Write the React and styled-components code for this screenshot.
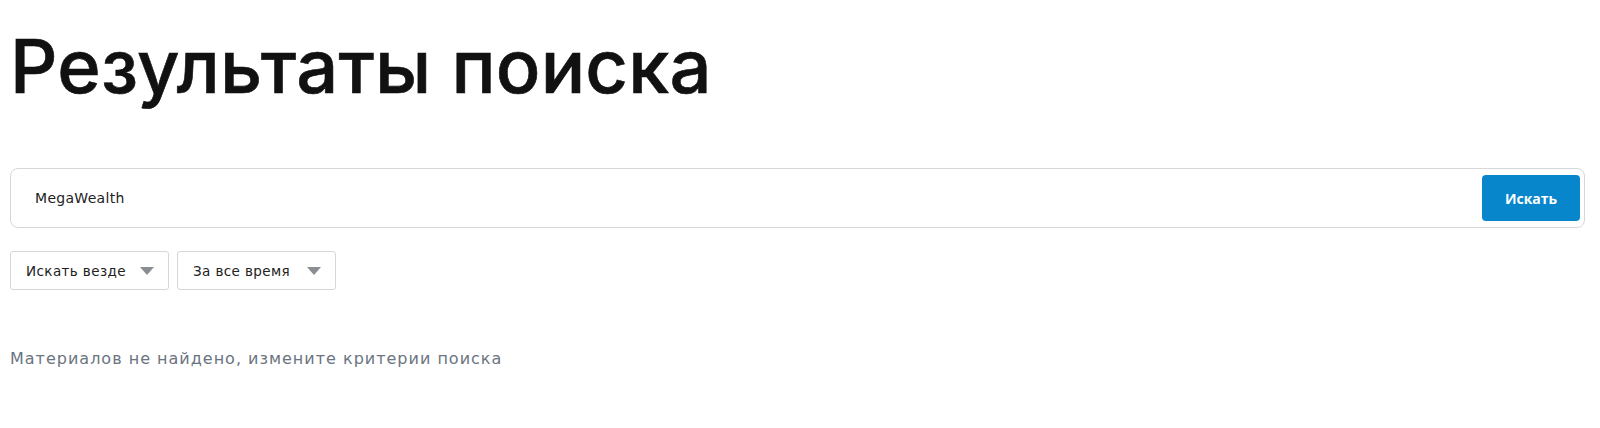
import React from "react";
import styled, { createGlobalStyle } from "styled-components";

const GlobalStyle = createGlobalStyle`
  body {
    margin: 0;
    background: #fff;
    font-family: "DejaVu Sans", "Open Sans", sans-serif;
  }
`;

export default function App() {
  return (
    <>
      <GlobalStyle />
      <Page>
        <Title>Результаты поиска</Title>
        <SearchBox>
          <SearchInput defaultValue="MegaWealth" />
          <SearchButton>Искать</SearchButton>
        </SearchBox>
        <Filters>
          <Select>
            <span>Искать везде</span>
            <Arrow />
          </Select>
          <Select>
            <span>За все время</span>
            <Arrow />
          </Select>
        </Filters>
        <Empty>Материалов не найдено, измените критерии поиска</Empty>
      </Page>
    </>
  );
}

const Arrow = () => (
  <ArrowSvg viewBox="0 0 14 8">
    <path d="M0 0 H14 L7 8 Z" fill="#8a8d92" />
  </ArrowSvg>
);

const Page = styled.div`
  padding: 21px 15px 0 10px;
`;

const Title = styled.h1`
  margin: 0;
  font-family: "Inter", "Liberation Sans", sans-serif;
  font-size: 74px;
  font-weight: 500;
  letter-spacing: 0.2px;
  line-height: 90px;
  color: #111;
  -webkit-text-stroke: 0.6px #111;
`;

const SearchBox = styled.div`
  margin-top: 57px;
  height: 60px;
  box-sizing: border-box;
  border: 1px solid #d5d7da;
  border-radius: 8px;
  display: flex;
  align-items: center;
  padding: 0 4px 0 22px;
`;

const SearchInput = styled.input`
  flex: 1;
  border: 0;
  outline: none;
  font-family: "DejaVu Sans", sans-serif;
  font-size: 14px;
  letter-spacing: 0.3px;
  color: #222;
  background: transparent;
`;

const SearchButton = styled.button`
  width: 98px;
  height: 46px;
  border: 0;
  border-radius: 4px;
  background: #0786cc;
  color: #fff;
  font-family: "Open Sans", "Liberation Sans", sans-serif;
  font-size: 14px;
  font-weight: 700;
`;

const Filters = styled.div`
  margin-top: 23px;
  display: flex;
  gap: 8px;
`;

const Select = styled.div`
  width: 159px;
  height: 39px;
  box-sizing: border-box;
  border: 1px solid #d5d7da;
  border-radius: 3px;
  display: flex;
  align-items: center;
  justify-content: space-between;
  padding: 0 14px 0 15px;
  font-family: "DejaVu Sans", sans-serif;
  font-size: 13.5px;
  letter-spacing: 0.4px;
  color: #222;
`;

const ArrowSvg = styled.svg`
  width: 14px;
  height: 8px;
  flex-shrink: 0;
`;

const Empty = styled.p`
  margin: 59px 0 0;
  font-family: "DejaVu Sans", sans-serif;
  font-size: 16px;
  letter-spacing: 1px;
  color: #6b7480;
`;
